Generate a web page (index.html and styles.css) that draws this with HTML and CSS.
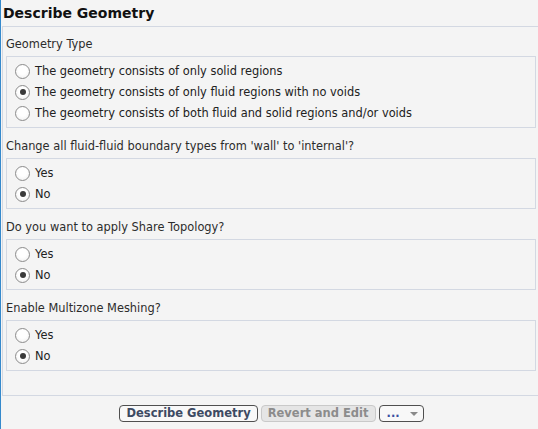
FILE: index.html
```html
<!DOCTYPE html>
<html>
<head>
<meta charset="utf-8">
<link rel="stylesheet" href="styles.css">
</head>
<body>
<div class="app">
  <div class="header">Describe Geometry</div>
  <div class="panel">
    <section class="q first">
      <div class="label">Geometry Type</div>
      <div class="group">
        <div class="opt"><span class="radio"></span><span>The geometry consists of only solid regions</span></div>
        <div class="opt"><span class="radio on"></span><span>The geometry consists of only fluid regions with no voids</span></div>
        <div class="opt"><span class="radio"></span><span>The geometry consists of both fluid and solid regions and/or voids</span></div>
      </div>
    </section>
    <section class="q">
      <div class="label">Change all fluid-fluid boundary types from 'wall' to 'internal'?</div>
      <div class="group">
        <div class="opt"><span class="radio"></span><span>Yes</span></div>
        <div class="opt"><span class="radio on"></span><span>No</span></div>
      </div>
    </section>
    <section class="q">
      <div class="label">Do you want to apply Share Topology?</div>
      <div class="group">
        <div class="opt"><span class="radio"></span><span>Yes</span></div>
        <div class="opt"><span class="radio on"></span><span>No</span></div>
      </div>
    </section>
    <section class="q">
      <div class="label">Enable Multizone Meshing?</div>
      <div class="group">
        <div class="opt"><span class="radio"></span><span>Yes</span></div>
        <div class="opt"><span class="radio on"></span><span>No</span></div>
      </div>
    </section>
  </div>
  <div class="actions">
    <button class="btn primary">Describe Geometry</button>
    <button class="btn disabled">Revert and Edit</button>
    <button class="btn more"><span class="dots">...</span><span class="caret"></span></button>
  </div>
</div>
</body>
</html>
```

FILE: styles.css
```css
html, body {
  margin: 0;
  padding: 0;
  background: #f4f4f4;
  overflow: hidden;
}

.app {
  width: 538px;
  height: 429px;
  box-sizing: border-box;
  border-left: 1px solid #3589cc;
  background: #f4f4f4;
  font-family: "DejaVu Sans", sans-serif;
  font-size: 11.4px;
  color: #222;
}

.header {
  height: 26px;
  line-height: 26px;
  padding-left: 2px;
  font-weight: bold;
  font-size: 14px;
  color: #111;
}

.panel {
  margin-left: 1px;
  border: 1px solid #d3d8e2;
  border-right: none;
  padding: 0 2px 24px 3px;
}

.q .label {
  padding-top: 10px;
  line-height: 16px;
  margin-bottom: 4px;
  color: #2c2c2c;
  white-space: nowrap;
}

.q.first .label {
  padding-top: 9px;
}

.group {
  border: 1px solid #d3d8e2;
  padding: 3.5px 0;
}

.opt {
  display: flex;
  align-items: center;
  height: 21px;
  padding-left: 8px;
  gap: 5px;
  white-space: nowrap;
}

.radio {
  width: 15px;
  height: 15px;
  box-sizing: border-box;
  border-radius: 50%;
  border: 1px solid #8c8c8c;
  background: radial-gradient(circle at 50% 40%, #ffffff 40%, #ececec 100%);
  display: flex;
  align-items: center;
  justify-content: center;
  flex: none;
}

.radio.on::after {
  content: "";
  width: 6px;
  height: 6px;
  border-radius: 50%;
  background: #3a3a3a;
}

.actions {
  display: flex;
  justify-content: center;
  gap: 3px;
  padding: 9px 0 0 4px;
}

.btn {
  height: 17px;
  box-sizing: border-box;
  padding: 0 6px;
  border-radius: 4px;
  font-family: "DejaVu Sans", sans-serif;
  font-weight: bold;
  font-size: 11.5px;
  line-height: 15px;
  margin: 0;
}

.btn.primary {
  border: 1px solid #4f4f4f;
  background: #f8f8f8;
  color: #3d4a63;
}

.btn.disabled {
  border: 1px solid #c9c9c9;
  background: #e5e5e5;
  color: #8c8c8c;
}

.btn.more {
  width: 45px;
  border: 1px solid #4f4f4f;
  background: #f8f8f8;
  color: #3a4fa0;
  display: flex;
  align-items: center;
  justify-content: space-between;
  padding: 0 5px 0 7px;
}

.dots {
  line-height: 15px;
}

.caret {
  width: 0;
  height: 0;
  border-left: 4px solid transparent;
  border-right: 4px solid transparent;
  border-top: 4px solid #8a8a8a;
}
```
